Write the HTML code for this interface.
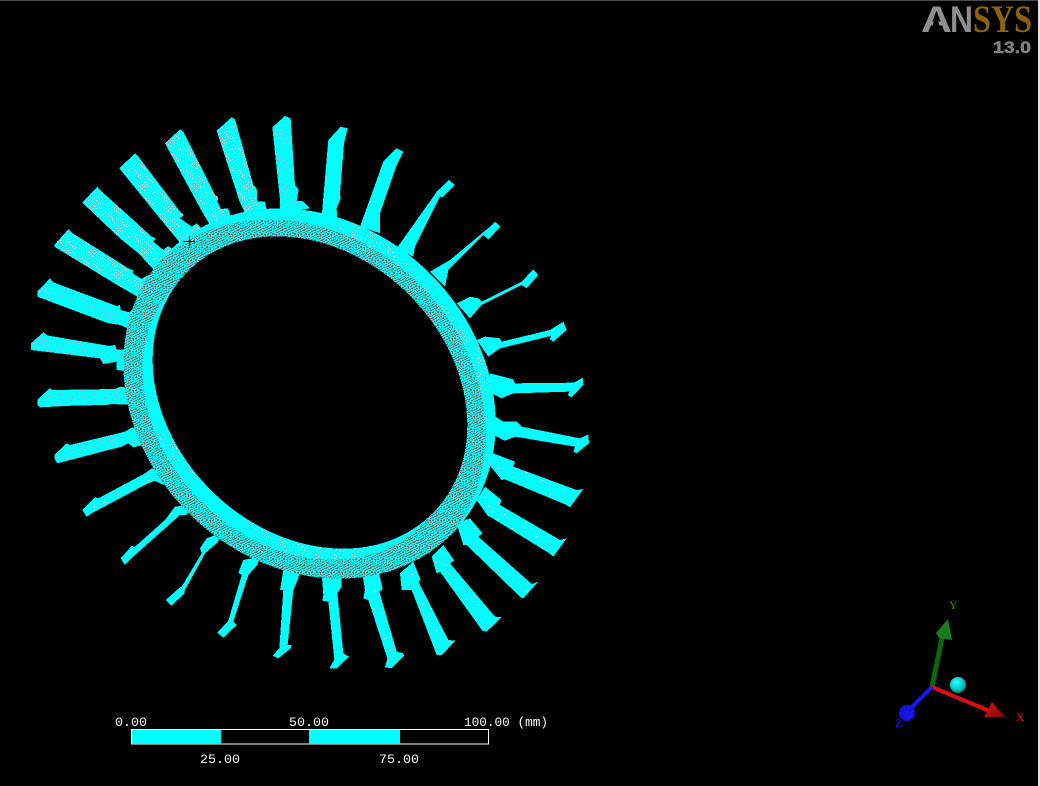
<!DOCTYPE html>
<html><head><meta charset="utf-8"><title>ANSYS</title>
<style>html,body{margin:0;padding:0;background:#000;overflow:hidden}svg{display:block}</style></head>
<body>
<svg width="1040" height="786" viewBox="0 0 1040 786" xmlns="http://www.w3.org/2000/svg">
<defs>
<pattern id="a" width="13" height="11" patternUnits="userSpaceOnUse">
<rect width="13" height="11" fill="#0ff"/>
<g fill="#e4e4e4"><rect x="1" y="0" width="1" height="1"/><rect x="5" y="1" width="1" height="1"/><rect x="9" y="0" width="1" height="1"/><rect x="3" y="2" width="1" height="1"/><rect x="11" y="2" width="1" height="1"/><rect x="7" y="3" width="1" height="1"/><rect x="0" y="4" width="1" height="1"/><rect x="4" y="5" width="1" height="1"/><rect x="10" y="5" width="1" height="1"/><rect x="2" y="6" width="1" height="1"/><rect x="7" y="6" width="1" height="1"/><rect x="12" y="7" width="1" height="1"/><rect x="5" y="8" width="1" height="1"/><rect x="9" y="8" width="1" height="1"/><rect x="1" y="9" width="1" height="1"/><rect x="3" y="10" width="1" height="1"/><rect x="7" y="10" width="1" height="1"/><rect x="11" y="10" width="1" height="1"/></g>
</pattern>
<pattern id="b" width="17" height="13" patternUnits="userSpaceOnUse">
<rect width="17" height="13" fill="#0ff"/>
<g fill="#a8a8a8"><rect x="2" y="1" width="1" height="1"/><rect x="9" y="0" width="1" height="1"/><rect x="14" y="3" width="1" height="1"/><rect x="6" y="4" width="1" height="1"/><rect x="11" y="6" width="1" height="1"/><rect x="1" y="7" width="1" height="1"/><rect x="16" y="8" width="1" height="1"/><rect x="7" y="9" width="1" height="1"/><rect x="3" y="11" width="1" height="1"/><rect x="12" y="11" width="1" height="1"/></g>
</pattern>
<pattern id="c" width="19" height="17" patternUnits="userSpaceOnUse">
<rect width="19" height="17" fill="#0ff"/>
<g fill="#eee"><rect x="3" y="2" width="1" height="1"/><rect x="14" y="5" width="1" height="1"/><rect x="8" y="10" width="1" height="1"/><rect x="17" y="14" width="1" height="1"/></g>
</pattern>
<pattern id="g" width="11" height="13" patternUnits="userSpaceOnUse">
<rect width="11" height="13" fill="#0ff"/>
<g fill="#6c6c6c"><rect x="0" y="0" width="2" height="1"/><rect x="3" y="0" width="2" height="1"/><rect x="8" y="0" width="2" height="1"/><rect x="1" y="1" width="1" height="1"/><rect x="6" y="1" width="2" height="1"/><rect x="1" y="2" width="1" height="1"/><rect x="4" y="2" width="2" height="1"/><rect x="9" y="2" width="2" height="1"/><rect x="3" y="3" width="1" height="1"/><rect x="7" y="3" width="2" height="1"/><rect x="0" y="4" width="2" height="1"/><rect x="5" y="4" width="1" height="1"/><rect x="9" y="4" width="1" height="1"/><rect x="3" y="5" width="2" height="1"/><rect x="7" y="5" width="1" height="1"/><rect x="10" y="5" width="1" height="1"/><rect x="1" y="6" width="3" height="1"/><rect x="6" y="6" width="2" height="1"/><rect x="0" y="7" width="1" height="1"/><rect x="4" y="7" width="2" height="1"/><rect x="9" y="7" width="2" height="1"/><rect x="2" y="8" width="2" height="1"/><rect x="7" y="8" width="2" height="1"/><rect x="0" y="9" width="2" height="1"/><rect x="5" y="9" width="3" height="1"/><rect x="3" y="10" width="2" height="1"/><rect x="9" y="10" width="2" height="1"/><rect x="1" y="11" width="2" height="1"/><rect x="6" y="11" width="2" height="1"/><rect x="4" y="12" width="1" height="1"/><rect x="8" y="12" width="2" height="1"/></g>
</pattern>
<pattern id="w" width="9" height="7" patternUnits="userSpaceOnUse">
<rect width="9" height="7" fill="#0ff"/>
<g fill="#e8e8e8"><rect x="1" y="1" width="1" height="1"/><rect x="5" y="0" width="1" height="1"/><rect x="3" y="3" width="1" height="1"/><rect x="7" y="4" width="1" height="1"/><rect x="1" y="5" width="1" height="1"/></g>
</pattern>
<pattern id="a3" href="#a" patternTransform="scale(3)"/>
<pattern id="b3" href="#b" patternTransform="scale(3)"/>
<pattern id="c3" href="#c" patternTransform="scale(3)"/>
<path id="ring" fill-rule="evenodd" clip-rule="evenodd" d="M165.6,254.6 A200,170 44 1 1 453.4,532.4 A200,170 44 1 1 165.6,254.6 Z M186.3,273 A172,138 44 1 1 433.7,512 A172,138 44 1 1 186.3,273 Z"/>
<clipPath id="shift"><path clip-rule="evenodd" transform="translate(-10,11)" d="M165.6,254.6 A200,170 44 1 1 453.4,532.4 A200,170 44 1 1 165.6,254.6 Z M186.3,273 A172,138 44 1 1 433.7,512 A172,138 44 1 1 186.3,273 Z"/></clipPath>
<clipPath id="ll"><polygon points="140,430 360,620 360,500 240,450"/></clipPath>
<clipPath id="ur"><polygon points="340,190 520,390 450,400 340,240"/></clipPath>
<radialGradient id="sph" cx="40%" cy="35%" r="70%"><stop offset="0" stop-color="#3ff"/><stop offset=".6" stop-color="#0cc"/><stop offset="1" stop-color="#077"/></radialGradient>
<linearGradient id="rc" x1="0" y1="0" x2="1" y2="1"><stop offset="0" stop-color="#e01010"/><stop offset="1" stop-color="#7a0c0c"/></linearGradient>
</defs>
<rect width="1040" height="786" fill="#000"/>
<rect x="0" y="0" width="1040" height="1" fill="#4a4a4a"/>
<rect x="1038" y="0" width="2" height="786" fill="#e4e4dc"/>

<g shape-rendering="crispEdges">
<!-- teeth upper-left -->
<g transform="translate(20,110) scale(.33333)">
<polygon fill="url(#b3)" points="757,52 795,18 812,25 825,225 836,238 830,272 850,274 870,295 780,310 780,270"/>
<polygon fill="url(#a3)" points="590,62 635,22 645,28 700,225 710,235 712,275 735,275 740,300 680,320 658,272"/>
<polygon fill="url(#a3)" points="435,100 480,58 490,65 585,255 595,262 592,275 603,297 625,295 635,330 570,345 545,303"/>
<polygon fill="url(#a3)" points="298,175 345,130 355,140 480,305 492,315 480,325 515,350 530,340 560,370 490,410 440,350"/>
<polygon fill="url(#a3)" points="187,278 232,230 240,240 395,380 407,385 400,395 430,420 445,408 470,430 420,500 358,432 300,385"/>
<polygon fill="url(#a3)" points="103,405 145,358 155,368 330,478 340,480 338,490 365,507 385,495 410,520 370,570 300,530 103,410"/>
<polygon fill="url(#b3)" points="52,545 90,505 100,517 290,588 300,585 302,600 328,607 345,590 360,670 300,645 265,640 52,560"/>
<polygon fill="url(#b3)" points="33,700 70,667 85,677 270,708 285,705 290,718 340,720 330,785 290,780 290,755 250,762 240,745 33,720"/>
</g>
<!-- teeth lower-left -->
<g transform="translate(20,390) scale(.33333)">
<polygon fill="url(#b3)" points="52,30 88,-5 100,0 285,-3 300,-10 340,-5 340,45 275,42 260,45 155,47 60,52 52,45"/>
<polygon fill="url(#b3)" points="103,195 140,160 150,165 315,125 335,113 360,110 370,165 340,172 325,160 305,170 112,220 103,205"/>
<polygon fill="url(#c3)" points="187,360 225,322 235,325 375,250 395,235 440,235 430,285 405,272 385,280 365,290 215,370 200,380"/>
<polygon fill="#0ff" points="302,505 335,468 345,470 435,390 465,350 510,345 500,375 480,375 345,495 315,525"/>
<polygon fill="#0ff" points="437,630 480,592 485,590 545,490 540,475 560,445 600,430 595,455 555,490 495,600 493,610 455,647"/>
<polygon fill="#0ff" points="592,728 625,692 665,555 655,548 670,510 720,500 712,525 685,555 640,695 650,705 610,743"/>
<polygon fill="#0ff" points="758,797 778,775 790,600 780,600 790,540 840,540 835,565 820,600 803,765 815,765 812,775 775,805"/>
</g>
<!-- teeth lower-right -->
<g transform="translate(300,390) scale(.33333)">
<polygon fill="#0ff" points="67,632 70,615 65,550 125,550 125,590 112,610 130,790 147,800 110,835 88,835 103,808 85,635"/>
<polygon fill="url(#c3)" points="190,625 195,600 185,540 235,540 248,598 238,605 290,785 310,790 312,797 275,835 255,832 262,805 205,630"/>
<polygon fill="url(#c3)" points="305,600 300,550 340,515 362,570 355,575 445,750 467,752 425,795 410,795 335,600"/>
<polygon fill="url(#c3)" points="410,550 395,500 430,465 463,512 450,520 585,680 605,682 560,725 547,722 420,545"/>
<polygon fill="url(#c3)" points="490,465 470,400 510,385 548,430 535,440 695,582 715,575 670,625 660,620 500,465"/>
<polygon fill="url(#c3)" points="565,380 530,330 555,290 605,330 600,345 780,450 800,445 760,500 748,490 570,380"/>
<polygon fill="url(#c3)" points="605,270 560,215 580,190 645,215 640,230 830,300 850,297 810,352 800,345 615,268"/>
<polygon fill="#0ff" points="615,152 570,130 580,75 610,95 650,95 665,110 840,145 865,133 867,160 830,190 820,185 825,170 645,140"/>
</g>
<!-- teeth upper-right -->
<g transform="translate(300,110) scale(.33333)">
<polygon fill="#0ff" points="605,865 565,845 570,790 640,808 645,820 822,818 848,803 850,825 815,862 803,855 808,845 640,850"/>
<polygon fill="#0ff" points="565,740 530,690 555,680 600,685 605,695 750,660 790,635 800,660 760,695 750,688 752,678 600,715"/>
<polygon fill="#0ff" points="510,625 470,580 510,560 535,565 545,575 665,515 700,478 715,495 680,535 665,525 545,585"/>
<polygon fill="#0ff" points="435,530 390,485 450,450 570,350 585,335 602,350 565,388 550,375 445,480"/>
<polygon fill="#0ff" points="340,440 290,415 400,260 410,245 447,210 465,225 428,262 420,260 345,410"/>
<polygon fill="#0ff" points="240,370 180,350 250,155 290,115 310,125 290,165 240,310 240,340"/>
<polygon fill="#0ff" points="112,340 65,320 85,90 122,50 143,55 132,100 120,250 122,265 110,295"/>
</g>
<!-- ring -->
<use href="#ring" fill="#0ff"/>
<g clip-path="url(#ll)"><use href="#ring" fill="url(#w)"/></g>
<g clip-path="url(#ur)"><use href="#ring" fill="url(#w)"/></g>
<g clip-path="url(#shift)"><use href="#ring" fill="url(#g)"/></g>
<!-- crosshair -->
<rect x="183" y="241" width="12" height="1" fill="#000"/>
<rect x="189" y="236" width="1" height="12" fill="#000"/>
</g>

<!-- logo -->
<text x="921" y="32" font-family="'Liberation Sans',sans-serif" font-weight="bold" font-size="37" fill="#8e8e8e" textLength="31" lengthAdjust="spacingAndGlyphs">A</text>
<polygon points="931,33 941,33 936,12" fill="#000"/>
<text x="950" y="32" font-family="'Liberation Sans',sans-serif" font-weight="bold" font-size="37" fill="#8e8e8e" textLength="23" lengthAdjust="spacingAndGlyphs">N</text>
<text x="973" y="32" font-family="'Liberation Serif',serif" font-weight="bold" font-size="39" fill="#8a6410" textLength="59" lengthAdjust="spacingAndGlyphs">SYS</text>
<text x="993" y="53" font-family="'Liberation Sans',sans-serif" font-weight="bold" font-size="17" fill="#808080" stroke="#808080" stroke-width=".5" textLength="38" lengthAdjust="spacingAndGlyphs">13.0</text>

<!-- scale bar -->
<rect x="131.5" y="729.5" width="357" height="14.5" fill="#000" stroke="#fff" stroke-width="1"/>
<rect x="132" y="730" width="89" height="14" fill="#0ff"/>
<rect x="309" y="730" width="91" height="14" fill="#0ff"/>
<g font-family="'Liberation Mono',monospace" font-size="13" fill="#fff">
<text x="115" y="726" textLength="32" lengthAdjust="spacingAndGlyphs">0.00</text>
<text x="289" y="726" textLength="40" lengthAdjust="spacingAndGlyphs">50.00</text>
<text x="464" y="726" textLength="84" lengthAdjust="spacingAndGlyphs">100.00 (mm)</text>
<text x="200" y="763" textLength="40" lengthAdjust="spacingAndGlyphs">25.00</text>
<text x="379" y="763" textLength="40" lengthAdjust="spacingAndGlyphs">75.00</text>
</g>

<!-- triad -->
<line x1="932" y1="687" x2="942" y2="638" stroke="#0c660c" stroke-width="5"/>
<polygon points="948,619 936,633 939,638 952,640" fill="#1a7c1a"/>
<line x1="932" y1="687" x2="992" y2="712" stroke="#d81010" stroke-width="4"/>
<polygon points="1005,717 992,702 984,717" fill="url(#rc)"/>
<line x1="932" y1="687" x2="907" y2="712" stroke="#1818f0" stroke-width="4"/>
<circle cx="907" cy="713" r="8" fill="#1414e0"/>
<circle cx="958" cy="685" r="8" fill="url(#sph)"/>
<g font-family="'Liberation Serif',serif" font-size="12">
<text x="949" y="609" fill="#1a9a1a">Y</text>
<text x="1016" y="721" fill="#e01010">X</text>
<text x="895" y="727" fill="#1818f0">Z</text>
</g>
</svg>
</body></html>
